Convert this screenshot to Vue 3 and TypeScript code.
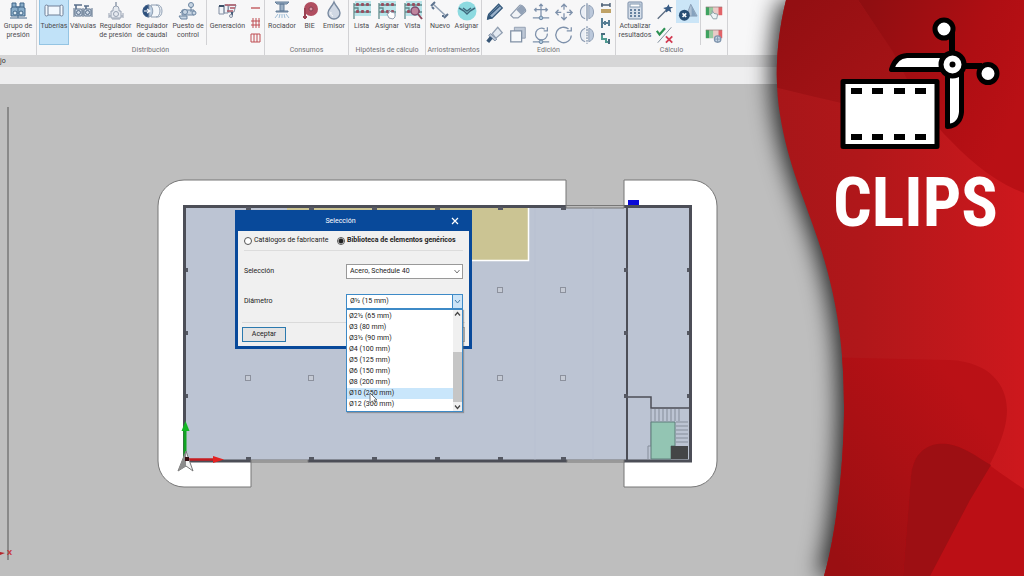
<script setup lang="ts">
import { ref } from 'vue'

interface Tool {
  icon: string
  label?: string
  active?: boolean
}
interface Group {
  id: string
  title: string
  tools: Tool[]
  small?: Tool[]
  side?: Tool[]
}

const groups: Group[] = [
  { id: 'bombeo', title: '', tools: [{ icon: 'pump', label: 'Grupo de presión' }] },
  {
    id: 'distribucion',
    title: 'Distribución',
    tools: [
      { icon: 'pipe', label: 'Tuberías', active: true },
      { icon: 'valve', label: 'Válvulas' },
      { icon: 'pressure', label: 'Regulador de presión' },
      { icon: 'flow', label: 'Regulador de caudal' },
      { icon: 'station', label: 'Puesto de control' },
      { icon: 'generate', label: 'Generación' },
    ],
    side: [{ icon: 'lineRed' }, { icon: 'gridRed' }, { icon: 'frameRed' }],
  },
  {
    id: 'consumos',
    title: 'Consumos',
    tools: [
      { icon: 'sprinkler', label: 'Rociador' },
      { icon: 'hose', label: 'BIE' },
      { icon: 'drop', label: 'Emisor' },
    ],
  },
  {
    id: 'hipotesis',
    title: 'Hipótesis de cálculo',
    tools: [
      { icon: 'list', label: 'Lista' },
      { icon: 'listHand', label: 'Asignar' },
      { icon: 'listView', label: 'Vista' },
    ],
  },
  {
    id: 'arriostramientos',
    title: 'Arriostramientos',
    tools: [
      { icon: 'brace', label: 'Nuevo' },
      { icon: 'braceAssign', label: 'Asignar' },
    ],
  },
  {
    id: 'edicion',
    title: 'Edición',
    tools: [],
    small: [
      { icon: 'pencil' }, { icon: 'eraser' }, { icon: 'moveNode' }, { icon: 'move' }, { icon: 'mirror' },
      { icon: 'brush' }, { icon: 'copy' }, { icon: 'rotateNode' }, { icon: 'rotate' }, { icon: 'mirrorDash' },
    ],
    side: [{ icon: 'measure' }, { icon: 'align' }, { icon: 'elbow' }],
  },
  {
    id: 'calculo',
    title: 'Cálculo',
    tools: [{ icon: 'calculator', label: 'Actualizar resultados' }],
    small: [{ icon: 'wand' }, { icon: 'warnings', active: true }, { icon: 'checks' }],
    side: [{ icon: 'scaleHand' }, { icon: 'scaleGear' }],
  },
]

const dots = (y: number) =>
  [5, 10, 15].map((x) => `<rect x="${x}" y="${y}" width="3" height="3" rx="1" fill="#8c3d50"/>`).join('')
const listBase =
  '<path d="M4 1h16v15H4z" fill="#b3e3e8"/><path d="M3 19V3M3 5h17M3 12h17M3 8h4v4" fill="none" stroke="#4f7f80" stroke-width="1.3"/>' +
  dots(3) + dots(10)
const scaleBase =
  '<rect x="2" y="5" width="18" height="9" fill="#e9c7c3"/><rect x="2" y="5" width="4" height="9" fill="#2c9a50"/><rect x="6" y="5" width="4" height="9" fill="#8cc797"/><rect x="16" y="5" width="4" height="9" fill="#e05359"/><path d="M2 5h18" stroke="#8d7070" stroke-width=".8"/>'
const blue = 'fill="none" stroke="#7186a3" stroke-width="1.4"'

const icons: Record<string, string> = {
  pump: '<g fill="#7fa6c4" stroke="#31597e"><path d="M5 3h4v4h4V3h4v5h1v8H4V8h1z"/><path d="M3 18h17M6 12h4m2 0h4M5 7h12M11 8v10"/><circle cx="8" cy="13" r="2" fill="#dbe9f3"/><circle cx="14" cy="13" r="2" fill="#dbe9f3"/></g>',
  pipe: '<g fill="#f8fbff" stroke="#67758d"><rect x="4" y="6" width="14" height="9"/><rect x="2" y="5" width="3" height="11" rx="1.5"/><rect x="17" y="5" width="3" height="11" rx="1.5"/></g>',
  valve: '<g fill="#c9d5e4" stroke="#49617f"><path d="M2 5h8M4 5v4M12 6h5M14 6v3" stroke-width="1.6"/><rect x="3" y="9" width="7" height="7" rx="1"/><rect x="12" y="9" width="7" height="7" rx="1"/><circle cx="6.500" cy="12.500" r="2"/><circle cx="15.500" cy="12.500" r="2"/><path d="M2 8v9M20 8v9M11 8v9"/></g>',
  pressure: '<g fill="#e5e9f0" stroke="#8c98aa"><path d="M11 2v4" stroke-width="1.6"/><path d="M8 9a3 3 0 0 1 6 0v2h2v7H6v-7h2zM4 13v5M18 13v5M4 16h2m10 0h2M7 19h8"/><circle cx="11" cy="14" r="2.500"/></g>',
  flow: '<g stroke="#8395ab"><path d="M10 5h7a4 6 0 0 1 0 12h-7z" fill="#f4f7fb"/><path d="M15 5a4 6 0 0 1 0 12" fill="none"/><path d="M8 5C0 5 0 17 8 17z" fill="#183e70" stroke="#183e70"/><path d="M8 5c5 1 5 11 0 12z" fill="#b8cbe0"/><path d="M3 11h6M6 9l3 2-3 2" fill="none" stroke="#fff" stroke-width="1.2"/></g>',
  station: '<g fill="#c3d2e1" stroke="#5d7998"><circle cx="14" cy="5" r="2.500"/><path d="M14 7v5M5 10h12v5H5zM3 13l5-4M2 16h8v3H4z"/><circle cx="8" cy="12" r="2.500"/><circle cx="17" cy="13" r="2"/></g>',
  generate: '<g fill="#f1f3f7" stroke="#77849a"><path d="M2 6h5v8H2zM7 5h4v8H7zM12 5h7l-2 7h-6z"/><path d="M2 6h5" stroke="#283e59" stroke-width="2"/><path d="M8 5h11M10 11h6M13 8h5" stroke="#a84a58" stroke-width="1.300"/><path d="M15 12v4" stroke="#34506f" stroke-width="2"/><circle cx="14" cy="16" r="1.500"/></g>',
  lineRed: '<path d="M1 6h9" stroke="#b93b40" stroke-width="1.3"/>',
  gridRed: '<path d="M1 4h9M1 8h9M3 1v10M6 1v10M9 1v10" stroke="#b93b40" fill="none"/>',
  frameRed: '<path d="M1 2h9v8H1zM4 2v8M7 2v8" stroke="#b93b40" fill="none"/>',
  sprinkler: '<g stroke="#55718f" fill="#93a9c0"><path d="M4 2h14l-2 2H6zM9 4h4v7H9zM5 11h12v1H5z"/><path d="M7 14l-3 4M9 14l-1 4M11 14v4M13 14l1 4M15 14l3 4" stroke="#92b4d1"/></g>',
  hose: '<circle cx="12" cy="9" r="7" fill="#a93c50"/><circle cx="12" cy="9" r="2" fill="#d98b98" stroke="#762c40"/><path d="M6 8v11M4 17h4" stroke="#922f43" stroke-width="2"/>',
  drop: '<path d="M11 2C9 7 5 9 5 13a6 6 0 0 0 12 0C17 9 13 7 11 2z" fill="#ccd5e2" stroke="#6c7f98" stroke-width="1.4"/><path d="M8 12a3 3 0 0 0 2 4" fill="none" stroke="#fff"/>',
  list: listBase,
  listHand: listBase + '<path d="M13 18l-2-4 2-1v-3l2 2 4 1v4l-2 2z" fill="#fff" stroke="#8796a7"/>',
  listView: listBase + '<circle cx="13" cy="11" r="4" fill="#b97995" stroke="#713b60" stroke-width="1.5"/><path d="M16 14l4 5" stroke="#81374c" stroke-width="2"/>',
  brace: '<path d="M4 4l13 12" stroke="#8899ae" stroke-width="1.6"/><path d="M2 6l4-4M15 18l4-4M3 7l2 2M14 15v2" stroke="#4d6583" stroke-width="2"/>',
  braceAssign: '<circle cx="11" cy="11" r="9.500" fill="#82d7de"/><path d="M3 8l5 3 3 3 3-3 5-3M7 8l4 3 4-3" fill="none" stroke="#2c5a70" stroke-width="1.500"/>',
  pencil: '<path d="M3 18l1-5L15 2l4 4L8 17z" fill="#91abc7" stroke="#1f476d" stroke-width="1.4"/><path d="M5 14l11-10M3 18l4-1-3-3z" stroke="#1f476d" fill="#1f476d" stroke-width="1.500"/>',
  eraser: '<path d="M3 14L13 3q2-1 5 3t0 5l-7 6H6z" fill="#f1f3f6" stroke="#8291a5" stroke-width="1.3"/><path d="M9 8l6 6 4-5q0-4-5-6z" fill="#8999b0"/>',
  moveNode: `<path d="M11 2v13M4 8h14M9 4l2-2 2 2M6 6L4 8l2 2M16 6l2 2-2 2M2 17h18" ${blue}/><circle cx="11" cy="17" r="2" fill="#a9c5dd" stroke="#557494"/>`,
  move: `<path d="M11 2v6M11 12v7M2 11h6M14 11h6M8 5l3-3 3 3M8 16l3 3 3-3M5 8l-3 3 3 3M17 8l3 3-3 3" ${blue}/>`,
  mirror: '<path d="M9 3a8 8 0 0 0 0 15" fill="#e9eef5" stroke="#8192aa" stroke-width="1.2"/><path d="M13 3a8 8 0 0 1 0 15z" fill="#b5c4d8" stroke="#8192aa"/><path d="M11 1v19" stroke="#5d7595" stroke-width="1.2"/>',
  mirrorDash: '<path d="M9 3a8 8 0 0 0 0 15" fill="#e9eef5" stroke="#8192aa" stroke-width="1.2"/><path d="M13 3a8 8 0 0 1 0 15z" fill="#b5c4d8" stroke="#8192aa"/><path d="M11 1v19" stroke="#5d7595" stroke-width="1.2" stroke-dasharray="2 1"/>',
  brush: '<path d="M8 9l6-7 5 6-7 6z" fill="#e2e9f2" stroke="#8796aa" stroke-width="1.4"/><path d="M6 9l7 6-2 2-7-6z" fill="#b5c3d5" stroke="#6d7f98"/><path d="M3 18l4-5" stroke="#234568" stroke-width="4"/>',
  copy: '<path d="M7 2h12v12H7z" fill="#b8c3d3" stroke="#8593a8"/><path d="M3 6h12v12H3z" fill="#f8fafc" stroke="#75869d" stroke-width="1.4"/>',
  rotateNode: `<path d="M15 4a6.500 6.500 0 1 0 3 5M18 2v4h-4M2 18h18" ${blue}/><circle cx="11" cy="18" r="2" fill="#a9c5dd" stroke="#557494"/>`,
  rotate: `<path d="M16 4a8.500 8.500 0 1 0 3 7M19 2v4h-5" ${blue}/>`,
  measure: '<path d="M1 3h9M2 1v4M10 1v4" stroke="#3a4f68" stroke-width="1.4"/><rect x="1" y="7" width="10" height="4" fill="#ba9958"/>',
  align: '<path d="M2 1v10M2 6h8M9 3v6M5 4v4" stroke="#46718a" stroke-width="2"/>',
  elbow: '<path d="M2 2v5h4v3h4" fill="none" stroke="#409186" stroke-width="2"/><path d="M1 2h4M9 7v5" stroke="#365b70" stroke-width="2"/>',
  calculator: '<rect x="4" y="2" width="14" height="17" rx="1" fill="#d4dde9" stroke="#677e9c"/><rect x="6" y="4" width="10" height="3" fill="#fff" stroke="#7890aa"/><path d="M6 10h10M6 13h10M6 16h10" stroke="#577597" stroke-width="2" stroke-dasharray="2 2"/>',
  wand: '<path d="M3 18L14 7" stroke="#4c5e75" stroke-width="1.5"/><path d="M15 2l1 3 4 0-3 2 1 4-3-2-3 2v-3L9 6l4-1z" fill="#254c79"/>',
  warnings: '<path d="M14 2l7 13H9z" fill="#acbed1" stroke="#7f93ab"/><path d="M15 4v11h5z" fill="#7f9bb8"/><circle cx="7" cy="14" r="6" fill="#173e66"/><path d="M5 12l4 4M9 12l-4 4" stroke="#fff" stroke-width="1.700"/>',
  checks: '<path d="M3 19L18 2" stroke="#68798b"/><path d="M2 6l3 4 6-7" fill="none" stroke="#168541" stroke-width="2.4"/><path d="M12 12l7 7M19 12l-7 7" stroke="#cf2942" stroke-width="2"/>',
  scaleHand: scaleBase + '<path d="M10 18l-3-5 2-1v-3l2 3 4 1-1 5z" fill="#edf4f6" stroke="#7a939b"/>',
  scaleGear: scaleBase + '<circle cx="15" cy="15" r="3.500" fill="#c4d4e5" stroke="#738ba6" stroke-width="1.500"/><path d="M15 12v6M12 15h6" stroke="#738ba6"/>',
}

const sources = ['Catálogos de fabricante', 'Biblioteca de elementos genéricos']
const source = ref(sources[1])
const material = ref('Acero, Schedule 40')
const diameter = ref('Ø½ (15 mm)')
const diameters = [
  'Ø2½ (65 mm)', 'Ø3 (80 mm)', 'Ø3½ (90 mm)', 'Ø4 (100 mm)', 'Ø5 (125 mm)',
  'Ø6 (150 mm)', 'Ø8 (200 mm)', 'Ø10 (250 mm)', 'Ø12 (300 mm)',
]
const hovered = ref('Ø10 (250 mm)')
const listOpen = ref(true)
const dialogOpen = ref(true)

function choose(option: string): void {
  diameter.value = option
  listOpen.value = false
}

const columns = [[248, 378], [311, 378], [500, 378], [563, 378], [500, 290], [563, 290]]
const beams = [248, 311, 374, 437, 500, 563]
const wallStops = [270, 333, 396]
const filmHoles = [851, 872, 894, 915]
</script>

<template>
  <main class="app">
    <nav class="ribbon">
      <section v-for="g in groups" :key="g.id" class="group" :class="g.id">
        <div class="tools">
          <button v-for="t in g.tools" :key="t.icon" type="button" class="tool" :class="{ active: t.active }">
            <svg viewBox="0 0 22 21" aria-hidden="true" v-html="icons[t.icon]"></svg>
            <span>{{ t.label }}</span>
          </button>
          <div v-if="g.small" class="small">
            <button v-for="t in g.small" :key="t.icon" type="button" class="mini" :class="{ active: t.active }" :aria-label="t.icon">
              <svg viewBox="0 0 22 21" aria-hidden="true" v-html="icons[t.icon]"></svg>
            </button>
          </div>
          <div v-if="g.side" class="side">
            <button v-for="t in g.side" :key="t.icon" type="button" class="mini" :aria-label="t.icon">
              <svg :viewBox="g.id === 'calculo' ? '0 0 22 21' : '0 0 12 12'" aria-hidden="true" v-html="icons[t.icon]"></svg>
            </button>
          </div>
        </div>
        <h2>{{ g.title }}</h2>
      </section>
    </nav>
    <div class="tabbar">jo</div>
    <div class="viewbar"></div>

    <section class="canvas">
      <svg class="plan" viewBox="0 84 1024 492" preserveAspectRatio="xMinYMin slice" aria-hidden="true">
        <path d="M8 107V560" stroke="#777" stroke-width="1.500" />
        <path d="M0 552l5 1-5 2z" fill="#b5232a" />
        <text x="7" y="555" class="axis">X</text>

        <g fill="#fff" stroke="#777">
          <path d="M566 206V180H184A26 26 0 0 0 158 206V461A26 26 0 0 0 184 487H251V461H185V206Z" />
          <path d="M624 206V180H691A26 26 0 0 1 717 206V461A26 26 0 0 1 691 487H624V461H691V206Z" />
        </g>
        <rect x="185" y="207" width="506" height="254" fill="#bcc4d3" />
        <rect x="287" y="208" width="241" height="52" fill="#cbc493" />
        <path d="M287 260.500H528.500V208" fill="none" stroke="#fff" stroke-width="1.500" />
        <g fill="none" stroke="#4c4e57">
          <path d="M566 206.500H184.500V461H251M308 461H567M624 461H690.500V206.500H624" stroke-width="3" />
          <path d="M627 207V461" stroke-width="2" />
          <path d="M627 397H651V408H690" stroke-width="1.500" />
        </g>
        <g fill="#bbb" stroke="#777">
          <path d="M566 205.500H624V208H566zM251 460H308V462H251zM567 460H624V462H567z" />
        </g>
        <g fill="#555862">
          <template v-for="x in beams" :key="x">
            <rect :x="x - 2" y="207" width="5" height="3" />
            <rect :x="x - 2" y="457" width="5" height="3" />
          </template>
          <template v-for="y in wallStops" :key="y">
            <rect x="186" :y="y - 2" width="2" height="4" />
            <rect x="624" :y="y - 2" width="4" height="4" />
            <rect x="687" :y="y - 2" width="2" height="4" />
          </template>
        </g>
        <g fill="#c5cad4" stroke="#8c919d">
          <rect v-for="[x, y] in columns" :key="`${x}-${y}`" :x="x - 2.5" :y="y - 2.5" width="5" height="5" />
        </g>
        <path d="M535 208V460M593 208V460" stroke="#b5bdcd" stroke-width=".5" />

        <path d="M651 409V446H648V459" fill="none" stroke="#858d9a" />
        <path d="M651 422H675V446H671V459H651Z" fill="#93c5b3" stroke="#5e7c7b" />
        <path d="M655 409v12m4-12v12m4-12v12m4-12v12m4-12v12m4-12v12m4-12v12M676 422h12m-12 4h12m-12 4h12m-12 4h12m-12 4h12m-12 4h12" stroke="#858d9a" />
        <rect x="671" y="446" width="17" height="13" fill="#444547" />
        <rect x="628" y="200" width="11" height="5" fill="#0909d8" />

        <path d="M185 427V460" stroke="#10a421" stroke-width="3" />
        <path d="M185.500 421l4 10h-8z" fill="#13b524" />
        <path d="M187 459.500H215" stroke="#c61c21" stroke-width="2.500" />
        <path d="M213 456l11 3.500-11 3.500z" fill="#e32222" />
        <path d="M186 451l-8 20 8-5 7 5z" fill="#f4f4f4" stroke="#777" />
        <path d="M186 451l-8 20 8-5z" fill="#8b8b8b" />
        <rect x="185" y="457" width="4" height="4" fill="#350d12" />
      </svg>

      <form v-if="dialogOpen" class="dialog" role="dialog" aria-labelledby="dialog-title" @submit.prevent="dialogOpen = false">
        <header>
          <h1 id="dialog-title">Selección</h1>
          <button type="button" class="close" aria-label="Cerrar" @click="dialogOpen = false">
            <svg viewBox="0 0 8 8" aria-hidden="true"><path d="M1 1l6 6M7 1L1 7" stroke="#fff" stroke-width="1.200" /></svg>
          </button>
        </header>
        <div class="body">
          <div class="sources">
            <label v-for="s in sources" :key="s" :class="{ chosen: s === source }">
              <input v-model="source" type="radio" name="source" :value="s" />{{ s }}
            </label>
          </div>
          <div class="field">
            <label for="material">Selección</label>
            <div class="combo">
              <select id="material" v-model="material"><option>Acero, Schedule 40</option></select>
              <svg class="arrow" viewBox="0 0 9 13" aria-hidden="true"><path d="M2 5l2.500 3L7 5" fill="none" stroke="#777" /></svg>
            </div>
          </div>
          <div class="field">
            <label for="diameter">Diámetro</label>
            <div class="combo open">
              <select id="diameter" v-model="diameter" @mousedown.prevent="listOpen = !listOpen">
                <option>Ø½ (15 mm)</option>
                <option v-for="d in diameters" :key="d">{{ d }}</option>
              </select>
              <svg class="arrow" viewBox="0 0 9 13" aria-hidden="true"><path d="M2 5l2.500 3L7 5" fill="none" stroke="#4a7fa8" /></svg>
              <div v-if="listOpen" class="popup">
                <ul role="listbox" aria-label="Diámetro">
                  <li v-for="d in diameters" :key="d" role="option" :aria-selected="d === hovered" :class="{ hovered: d === hovered }" @mouseenter="hovered = d" @click="choose(d)">{{ d }}</li>
                </ul>
                <div class="scroll">
                  <svg viewBox="0 0 9 8" aria-hidden="true"><path d="M2 5l2.500-3L7 5" fill="none" stroke="#444" stroke-width="1.200" /></svg>
                  <div class="track"><div class="thumb"></div></div>
                  <svg viewBox="0 0 9 8" aria-hidden="true"><path d="M2 3l2.500 3L7 3" fill="none" stroke="#444" stroke-width="1.200" /></svg>
                </div>
                <svg class="pointer" viewBox="0 0 9 13" aria-hidden="true"><path d="M1 1v10l2.500-2 1.500 3 1.500-1-1.500-3h3z" fill="#fff" stroke="#555" stroke-width=".8" /></svg>
              </div>
            </div>
          </div>
          <footer>
            <button type="submit" class="accept">Aceptar</button>
            <button type="button" class="cancel" @click="dialogOpen = false">Cancelar</button>
          </footer>
        </div>
      </form>
    </section>

    <aside class="banner">
      <svg viewBox="724 0 300 576" preserveAspectRatio="xMaxYMin slice" aria-hidden="true">
        <defs>
          <linearGradient id="base" x1="0" x2="1"><stop offset="0" stop-color="#a71619" /><stop offset=".35" stop-color="#b0171a" /><stop offset="1" stop-color="#cd181d" /></linearGradient>
          <linearGradient id="top" gradientUnits="userSpaceOnUse" x1="860" y1="20" x2="1024" y2="90"><stop offset="0" stop-color="#8f0e11" /><stop offset=".65" stop-color="#af0e13" /><stop offset="1" stop-color="#b91015" /></linearGradient>
          <linearGradient id="low" gradientUnits="userSpaceOnUse" x1="830" y1="550" x2="990" y2="430"><stop offset="0" stop-color="#9a0f12" /><stop offset="1" stop-color="#ba1116" /></linearGradient>
          <linearGradient id="left" gradientUnits="userSpaceOnUse" x1="800" y1="0" x2="900" y2="110"><stop offset="0" stop-color="#930f12" /><stop offset="1" stop-color="#a91417" /></linearGradient>
          <clipPath id="wave"><path d="M786 0C775 45 775 85 780 115C788 165 805 200 818 240C838 300 844 350 844 407C844 465 836 535 824 576H1024V0Z" /></clipPath>
        </defs>
        <g class="shade">
          <g clip-path="url(#wave)">
            <rect x="770" width="254" height="576" fill="url(#base)" />
            <path d="M770 86Q810 96 850 105L940 120L858 0H770Z" fill="url(#left)" />
            <path d="M858 0L893 52Q925 117 950 140Q988 180 1024 193V0Z" fill="url(#top)" />
            <path d="M820 357L950 360C990 362 1007 385 1007 410C1007 435 992 462 970 500L930 576H800Z" fill="url(#low)" />
            <path d="M903 576L911 476C914 448 932 442 948 444C970 447 988 466 1024 489V576Z" fill="#bb0f15" />
            <path d="M903 576L911 476C914 448 932 442 948 444C963 446 977 457 991 465L970 500L930 576Z" fill="#9d0f13" />
          </g>
        </g>
        <rect x="843" y="81.500" width="94" height="65" fill="#fff" stroke="#000" stroke-width="5" stroke-linejoin="round" />
        <template v-for="x in filmHoles" :key="x">
          <rect :x="x" y="88" width="11" height="6" />
          <rect :x="x" y="134" width="11" height="6" />
        </template>
        <g fill="#fff" stroke="#000" stroke-width="5" stroke-linejoin="round">
          <path d="M944 55.500H907C899 56 894 61 891.500 69.500H944Z" />
          <path d="M947.500 73V126.500C957 126 961 119 961.500 112V73Z" />
          <path d="M952 32V55M962 66H982" stroke-width="6" />
          <circle cx="944" cy="29" r="9" />
          <circle cx="988" cy="73.500" r="9" />
          <circle cx="952.500" cy="64.500" r="11.500" />
        </g>
        <circle cx="952.500" cy="64.500" r="3" />
      </svg>
      <strong>CLIPS</strong>
    </aside>
  </main>
</template>

<style>
body { margin: 0; }
</style>

<style scoped>
* { box-sizing: border-box; }
.app { position: relative; display: flex; flex-direction: column; min-height: 100vh; overflow: hidden; background: #bebebe; color: #4b4b4f; font: 7px/9px Roboto, "Open Sans", sans-serif; }
button { border: 0; padding: 0; background: none; color: inherit; font: inherit; }
h1, h2 { margin: 0; font: inherit; }

.ribbon { display: flex; height: 55px; background: #f7f7f8; }
.group { display: flex; flex-direction: column; border-right: 1px solid #d2d2d5; }
.tools { display: grid; height: 45px; padding: 0 1px; }
.group h2 { height: 10px; line-height: 11px; text-align: center; white-space: nowrap; color: #707074; }
.bombeo .tools { grid-template-columns: 34px; }
.distribucion .tools { grid-template-columns: 31px 28px 37px 36px 36px 42px 15px; }
.consumos .tools { grid-template-columns: 32px 23px 26px; }
.hipotesis .tools { grid-template-columns: 23px 28px 23px; }
.arriostramientos .tools { grid-template-columns: 26px 27px; }
.edicion .tools { grid-template-columns: 115px 16px; }
.calculo .tools { grid-template-columns: 36px 48px 25px; }
.tool { display: flex; flex-direction: column; align-items: center; height: 45px; text-align: center; }
.tool svg { flex: none; width: 22px; height: 21px; opacity: .9; }
.tool span { margin-top: 1px; }
.tool.active { margin-left: 1px; border: 1px solid #94c4e3; border-top: 0; background: #c1e2f8; }
.distribucion .tool:nth-child(6) { border-left: 1px solid #d2d2d5; }
.small { display: grid; grid-template-columns: repeat(5, 23px); grid-auto-rows: 23px; height: 45px; }
.calculo .small { grid-template-columns: 23px 23px; border-right: 1px solid #d2d2d5; }
.side { display: grid; grid-auto-rows: 15px; height: 45px; justify-items: center; }
.calculo .side { grid-auto-rows: 23px; }
.mini { display: grid; place-items: center; }
.mini svg { opacity: .9; }
.small .mini svg, .calculo .side svg { width: 20px; height: 20px; }
.side svg { width: 12px; height: 12px; }
.mini.active { background: #cbe5f7; }

.tabbar { height: 12px; line-height: 12px; background: #d6d6d7; color: #333; }
.viewbar { height: 17px; background: #eeeeef; }
.canvas { position: relative; flex: 1; }
.plan { position: absolute; inset: 0; width: 100%; height: 100%; }
.axis { fill: #c8353b; font-size: 8px; font-weight: 700; }

.dialog { position: absolute; top: 126px; left: 235px; width: 237px; border: 3px solid #08499a; background: #f0f0f0; color: #222; }
.dialog header { display: grid; grid-template-columns: 28px 1fr 28px; height: 18px; background: #08499a; color: #fff; text-align: center; line-height: 16px; }
.dialog h1 { grid-column: 2; padding-right: 26px; }
.close { display: grid; place-items: center; height: 16px; }
.close svg { width: 8px; height: 8px; }
.body { padding: 0 6px 4px; }
.sources { display: grid; grid-template-columns: 93px 1fr; align-items: center; height: 20px; border-bottom: 1px solid #dcdcdc; white-space: nowrap; }
.sources label { display: flex; align-items: center; gap: 2px; }
.chosen { font-weight: 700; }
.sources input { appearance: none; width: 8px; height: 8px; margin: 0; border: 1px solid #555; border-radius: 50%; background: #fff; }
.sources input:checked { background: radial-gradient(#222 0 2px, #fff 3px); }
.field { display: grid; grid-template-columns: 102px 1fr; align-items: center; height: 15px; margin-top: 13px; }
.field + .field { margin-top: 15px; }
.combo { position: relative; display: grid; grid-template-columns: 1fr 10px; width: 117px; height: 15px; border: 1px solid #999; background: #fff; }
.combo select { grid-area: 1 / 1 / 2 / 3; appearance: none; border: 0; padding: 0 3px; outline: 0; background: transparent; color: inherit; font: inherit; }
.arrow { grid-area: 1 / 2; width: 100%; height: 13px; pointer-events: none; }
.open { border-color: #3d8ac7; }
.open .arrow { border-left: 1px solid #3d8ac7; background: #cce4f7; }
.popup { position: absolute; z-index: 1; top: 14px; left: -1px; display: grid; grid-template-columns: 1fr 9px; width: 117px; border: 1px solid #3d8ac7; background: #fff; box-shadow: 1px 1px 1px #6668; }
.popup ul { margin: 0; padding: 1px 0; list-style: none; }
.popup li { padding-left: 2px; line-height: 11px; }
.hovered { background: #c9e6fb; }
.scroll { display: flex; flex-direction: column; background: #f0f0f0; }
.scroll svg { height: 9px; }
.track { display: flex; flex: 1; flex-direction: column; justify-content: flex-end; }
.thumb { height: 60%; background: #c6c6c6; }
.pointer { position: absolute; top: 82px; left: 22px; width: 9px; height: 13px; }
.body footer { display: flex; justify-content: space-between; margin: 13px -2px 0; padding-top: 4px; border-top: 1px solid #dadada; }
.body footer button { width: 44px; height: 15px; border: 1px solid #aaa; background: #e3e3e3; }
.body footer .accept { border-color: #2b79ae; }

.banner { position: absolute; top: 0; right: 0; bottom: 0; width: 300px; pointer-events: none; }
.banner svg { display: block; width: 100%; height: 100%; }
.shade { filter: drop-shadow(-6px 0 11px #000c); }
.banner strong { position: absolute; top: 168px; right: 26px; color: #fff; font: 700 68px/70px "Roboto Condensed", Lato, sans-serif; }
</style>
